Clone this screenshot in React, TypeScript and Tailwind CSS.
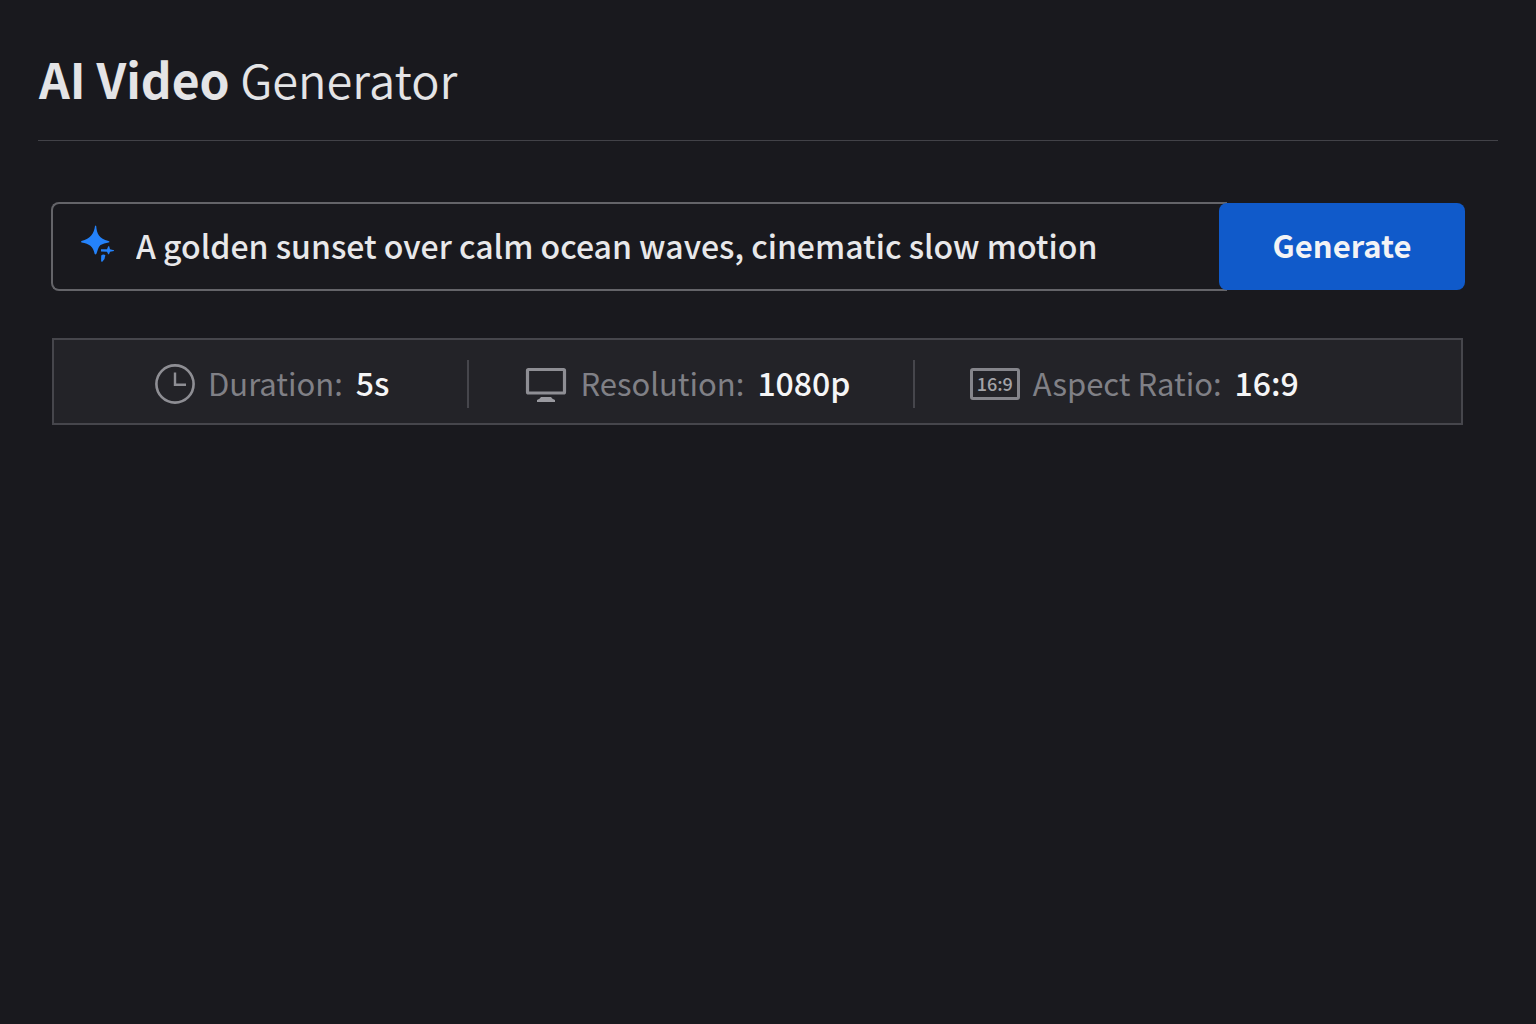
import { useState, type ReactNode } from "react";

function SparkleIcon() {
  return (
    <svg viewBox="0 0 36 46" className="h-[46px] w-9 shrink-0 fill-[#2482fa]" aria-hidden="true">
      <path d="M15 2Q15.600 .8 16.200 2C16.800 10 19 14.500 28.500 17Q30.500 17.800 28.500 18.600Q24 19.500 20.500 21C18 23 17.500 28 16.300 30Q15.500 30.800 14.700 30C13 22 9.500 20 1.500 18.500Q.5 17.800 1.500 17C10.500 14.500 14 10 15 2Z" />
      <path d="M21 25.200L27 25.200L28.200 22.300H29.200L30 25.200L34 26.200V27L30 27.800L29 30.200H28.200L27 27.800L21 27.600Z" />
      <path d="M21.200 31.600Q23 29.900 25.200 31Q25.600 35 22.300 37.800L21.100 37.400Z" />
    </svg>
  );
}

function ClockIcon() {
  return (
    <svg viewBox="0 0 40 40" className="size-10 shrink-0 fill-none stroke-[#8e8e94]" aria-hidden="true">
      <circle cx="20" cy="20" r="18.600" strokeWidth="2.600" />
      <path d="M20 8.500V20.800H31" strokeWidth="2.400" />
    </svg>
  );
}

function MonitorIcon() {
  return (
    <svg viewBox="0 0 42 40" className="h-10 w-[42px] shrink-0" aria-hidden="true">
      <rect x="2.500" y="5.500" width="37" height="23.500" rx="1" className="fill-none stroke-[#8e8e94]" strokeWidth="3.200" />
      <path d="M16 33H26Q27 35 30 36V38H12V36Q15 35 16 33Z" className="fill-[#9a9aa0]" />
    </svg>
  );
}

function RatioIcon() {
  return (
    <span
      aria-hidden="true"
      className="flex h-8 w-[50px] shrink-0 items-center justify-center rounded-[3px] border-[3px] border-[#85858b] pb-0.5 text-lg leading-none font-medium text-[#a3a3a8]"
    >
      16:9
    </span>
  );
}

function Setting({ icon, label, value }: { icon: ReactNode; label: string; value: string }) {
  return (
    <div className="flex items-center gap-[13px] whitespace-nowrap">
      {icon}
      <dl className="flex items-baseline gap-[13px] pb-0.5 leading-10">
        <dt className="text-[31px] text-[#808086]">{label}:</dt>
        <dd className="text-[32px] font-medium text-[#f5f5f6]">{value}</dd>
      </dl>
    </div>
  );
}

export default function App() {
  const [prompt, setPrompt] = useState("A golden sunset over calm ocean waves, cinematic slow motion");

  return (
    <main className="min-h-screen bg-[#19191e] px-[38px] pt-[43px] font-['Noto_Sans_CJK_SC','Noto_Sans',sans-serif]">
      <header className="border-b border-[#424248] pb-[26px]">
        <h1 className="pl-px text-[47px] leading-[70px] font-[350] text-[#e4e4e6]">
          <span className="text-5xl leading-[70px] font-bold">AI Video</span> Generator
        </h1>
      </header>

      <form className="mt-[61px] mr-[33px] ml-[13px] flex items-center" onSubmit={(e) => e.preventDefault()}>
        <div className="-mr-2 flex h-[89px] min-w-0 flex-1 items-center gap-5 rounded-l-lg border-2 border-r-0 border-[#646469] pr-4 pl-[27px]">
          <SparkleIcon />
          <input
            type="text"
            aria-label="Video prompt"
            value={prompt}
            onChange={(e) => setPrompt(e.target.value)}
            className="h-12 min-w-0 flex-1 bg-transparent pb-1 text-[32px] font-medium text-[#e8e8ea] outline-none"
          />
        </div>
        <button
          type="submit"
          className="relative h-[87px] w-[246px] shrink-0 rounded-lg bg-[#105aca] pb-0.5 text-[31px] font-bold text-[#f3f3f5]"
        >
          Generate
        </button>
      </form>

      <section
        aria-label="Video settings"
        className="mt-[47px] mr-[35px] ml-[14px] grid h-[87px] grid-cols-[416fr_446fr_547fr] items-center border-2 border-[#46464c] bg-[#232328] pt-1"
      >
        <div className="flex h-12 items-center border-r-2 border-[#46464c] pl-[101px]">
          <Setting icon={<ClockIcon />} label="Duration" value="5s" />
        </div>
        <div className="flex h-12 items-center border-r-2 border-[#46464c] pl-14">
          <Setting icon={<MonitorIcon />} label="Resolution" value="1080p" />
        </div>
        <div className="flex h-12 items-center pl-[55px]">
          <Setting icon={<RatioIcon />} label="Aspect Ratio" value="16:9" />
        </div>
      </section>
    </main>
  );
}
